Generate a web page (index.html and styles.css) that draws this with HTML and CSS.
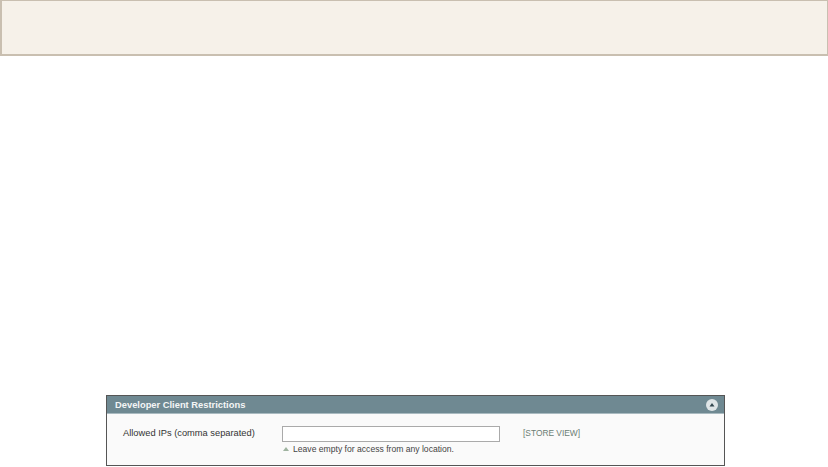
FILE: index.html
```html
<!DOCTYPE html>
<html lang="en">
<head>
<meta charset="utf-8">
<title>Developer Client Restrictions</title>
<link rel="stylesheet" href="styles.css">
</head>
<body>
<div class="notice"></div>
<section class="panel">
  <header class="panel-head">
    <h2 class="panel-title">Developer Client Restrictions</h2>
    <span class="toggle">
      <svg width="12" height="12" viewBox="0 0 12 12"><circle cx="6" cy="6" r="6" fill="#dfe5e7"/><path d="M6 4 L8.5 7.5 L3.5 7.5 Z" fill="#33474f"/></svg>
    </span>
  </header>
  <div class="panel-body">
    <label class="field-label">Allowed IPs (comma separated)</label>
    <div class="field-value">
      <input class="text-input" type="text">
      <p class="hint"><span class="hint-mark"></span>Leave empty for access from any location.</p>
    </div>
    <span class="scope">[STORE VIEW]</span>
  </div>
</section>
</body>
</html>
```
FILE: styles.css
```css
html, body { margin: 0; padding: 0; background: #fff; }
body { width: 828px; height: 467px; overflow: hidden; font-family: "Liberation Sans", Arial, sans-serif; color: #333; }
.notice { height: 53px; background: #f6f1e9; border: solid #c9bfb0; border-width: 1px 1px 2px 2px; }
.panel { margin: 339px 103px 0 106px; border: 1px solid #555; height: 71px; box-sizing: border-box; background: #fafafa; }
.panel-head { height: 18px; background: #6f8992; display: flex; align-items: center; justify-content: space-between; padding: 0 6px 0 8px; border-bottom: 1px solid #a9bac0; box-sizing: border-box; }
.panel-title { margin: 0; font-size: 9.35px; font-weight: bold; color: #f4f6f6; }
.toggle { display: flex; }
.panel-body { display: flex; align-items: flex-start; padding-top: 12px; font-size: 9.3px; }
.field-label { width: 159px; margin-left: 16px; margin-top: 2px; color: #333; }
.field-value { width: 218px; }
.text-input { display: block; width: 218px; height: 16px; box-sizing: border-box; border: 1px solid #aaa; background: #fff; padding: 0; margin: 0; }
.hint { margin: 2px 0 0; font-size: 8.6px; color: #444; display: flex; align-items: center; }
.hint-mark { width: 0; height: 0; border: 3px solid transparent; border-top: 0; border-bottom: 4px solid #9fb3a0; margin: 0 4px 0 1px; }
.scope { margin-left: 23px; margin-top: 2px; font-size: 8.4px; color: #6b7d74; }
```
